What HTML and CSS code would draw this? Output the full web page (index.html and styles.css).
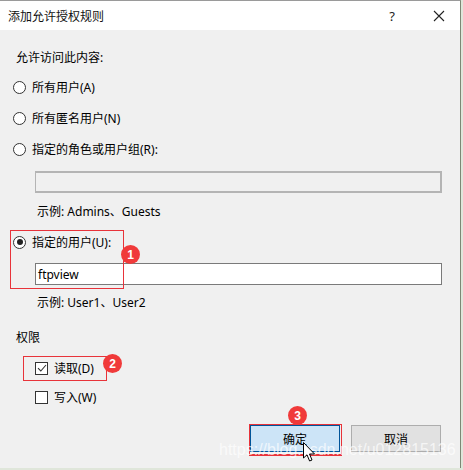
FILE: index.html
```html
<!DOCTYPE html>
<html lang="zh-CN">
<head>
<meta charset="utf-8">
<title>添加允许授权规则</title>
<link rel="stylesheet" href="styles.css">
</head>
<body>
<div class="dialog">
  <div class="titlebar">
    <span class="title">添加允许授权规则</span>
    <span class="help">?</span>
    <span class="close">
      <svg width="12" height="12" viewBox="0 0 12 12"><path d="M1 1 L11 11 M11 1 L1 11" stroke="#222" stroke-width="1.1" fill="none"/></svg>
    </span>
  </div>
  <div class="content">
    <div class="row heading">允许访问此内容:</div>
    <div class="row r1"><span class="radio"></span><span>所有用户(A)</span></div>
    <div class="row r2"><span class="radio"></span><span>所有匿名用户(N)</span></div>
    <div class="row r2"><span class="radio"></span><span>指定的角色或用户组(R):</span></div>
    <div class="field disabled f1"></div>
    <div class="row example e1">示例: Admins、Guests</div>
    <div class="row r4"><span class="radio checked"></span><span>指定的用户(U):</span></div>
    <div class="field f2">ftpview</div>
    <div class="row example e2">示例: User1、User2</div>
    <div class="row perm">权限</div>
    <div class="row cb1"><span class="check checked"><svg width="10" height="10" viewBox="0 0 10 10"><path d="M1 5.2 L3.8 8 L9 2" stroke="#333" stroke-width="1.1" fill="none"/></svg></span><span>读取(D)</span></div>
    <div class="row cb2"><span class="check"></span><span>写入(W)</span></div>
    <div class="buttons">
      <div class="btn primary">确定</div>
      <div class="btn">取消</div>
    </div>
  </div>

  <div class="mark box1"></div>
  <div class="badge b1">1</div>
  <div class="mark box2"></div>
  <div class="badge b2">2</div>
  <div class="mark box3"></div>
  <div class="badge b3">3</div>
  <div class="watermark">https://blog.csdn.net/u012815136</div>
  <svg class="cursor" width="14" height="22" viewBox="0 0 14 22"><path d="M0.5 0.5 L0.5 16 L4 12.8 L6.6 19 L9 18 L6.5 12 L11.5 12 Z" fill="#fff" stroke="#000" stroke-width="1"/></svg>
</div>
</body>
</html>
```
FILE: styles.css
```css
html, body {
  margin: 0;
  padding: 0;
  background: #dfe6da;
}
body {
  width: 463px;
  height: 470px;
  overflow: hidden;
  font-family: "Noto Sans", "Noto Sans CJK SC", sans-serif;
  font-size: 12px;
  color: #000;
}
.dialog {
  position: relative;
  width: 461px;
  height: 468px;
  background: #f0f0f0;
  border-top: 1px solid #9a9a9a;
  border-right: 1px solid #7d8775;
  box-sizing: border-box;
  overflow: hidden;
}
.titlebar {
  height: 29px;
  background: #fff;
  display: flex;
  align-items: center;
  padding-left: 8px;
}
.title {
  flex: 1;
  font-size: 12px;
  color: #111;
}
.help {
  width: 12px;
  text-align: center;
  font-size: 13px;
  margin-right: 35px;
  color: #222;
}
.close {
  width: 12px;
  height: 12px;
  margin-right: 15px;
  display: flex;
}
.content {
  display: flex;
  flex-direction: column;
  padding-left: 13px;
}
.row {
  height: 20px;
  display: flex;
  align-items: center;
}
.heading { margin-top: 17px; padding-left: 3px; }
.r1 { margin-top: 10px; }
.r2 { margin-top: 11px; }
.radio {
  width: 11px;
  height: 11px;
  border: 1px solid #333;
  border-radius: 50%;
  background: #fff;
  margin-right: 6px;
  box-sizing: content-box;
  position: relative;
}
.radio.checked::after {
  content: "";
  position: absolute;
  left: 2.5px;
  top: 2.5px;
  width: 6px;
  height: 6px;
  border-radius: 50%;
  background: #222;
}
.field {
  margin-left: 22px;
  width: 407px;
  height: 22px;
  box-sizing: border-box;
  border: 1px solid #7a7a7a;
  background: #fff;
  display: flex;
  align-items: center;
  padding-left: 2px;
  font-size: 12px;
}
.field.disabled {
  background: #f0f0f0;
  border-color: #b4b4b4;
  border-width: 2px 2px 2px 1px;
}
.f1 { margin-top: 12px; }
.example { margin-left: 24px; }
.e1 { margin-top: 8px; }
.r4 { margin-top: 11px; }
.f2 { margin-top: 11px; }
.e2 { margin-top: 7px; }
.perm { margin-top: 15px; padding-left: 3px; }
.cb1 { margin-top: 11px; padding-left: 22px; }
.cb2 { margin-top: 9px; padding-left: 22px; }
.check {
  width: 11px;
  height: 11px;
  border: 1px solid #333;
  background: #fff;
  margin-right: 6px;
  display: flex;
  align-items: center;
  justify-content: center;
}
.buttons {
  margin-top: 18px;
  display: flex;
  gap: 11px;
  padding-left: 237px;
}
.btn {
  width: 90px;
  height: 27px;
  box-sizing: border-box;
  border: 1px solid #adadad;
  background: #e1e1e1;
  display: flex;
  align-items: center;
  justify-content: center;
  font-size: 12px;
}
.btn.primary {
  background: #cce4f7;
  border: 1px solid #005499;
}
.mark {
  position: absolute;
  border: 1px solid #e8333a;
}
.box1 { left: 10px; top: 229px; width: 112px; height: 57px; }
.box2 { left: 23px; top: 355px; width: 82px; height: 23px; }
.box3 { left: 249px; top: 423px; width: 91px; height: 29px; border-width: 1px 1px 2px 1px; }
.badge {
  position: absolute;
  width: 19px;
  height: 19px;
  border-radius: 50%;
  background: #f03a3a;
  color: #fff;
  font-family: "Liberation Sans", sans-serif;
  font-weight: bold;
  font-size: 12px;
  display: flex;
  align-items: center;
  justify-content: center;
}
.b1 { left: 121px; top: 244px; }
.b2 { left: 103px; top: 353px; }
.b3 { left: 288px; top: 405px; }
.watermark {
  position: absolute;
  left: 219px;
  top: 440px;
  font-family: "Liberation Sans", sans-serif;
  font-size: 16px;
  color: rgba(255, 255, 255, 0.7);
  white-space: nowrap;
}
.cursor {
  position: absolute;
  left: 303px;
  top: 441px;
}
```
